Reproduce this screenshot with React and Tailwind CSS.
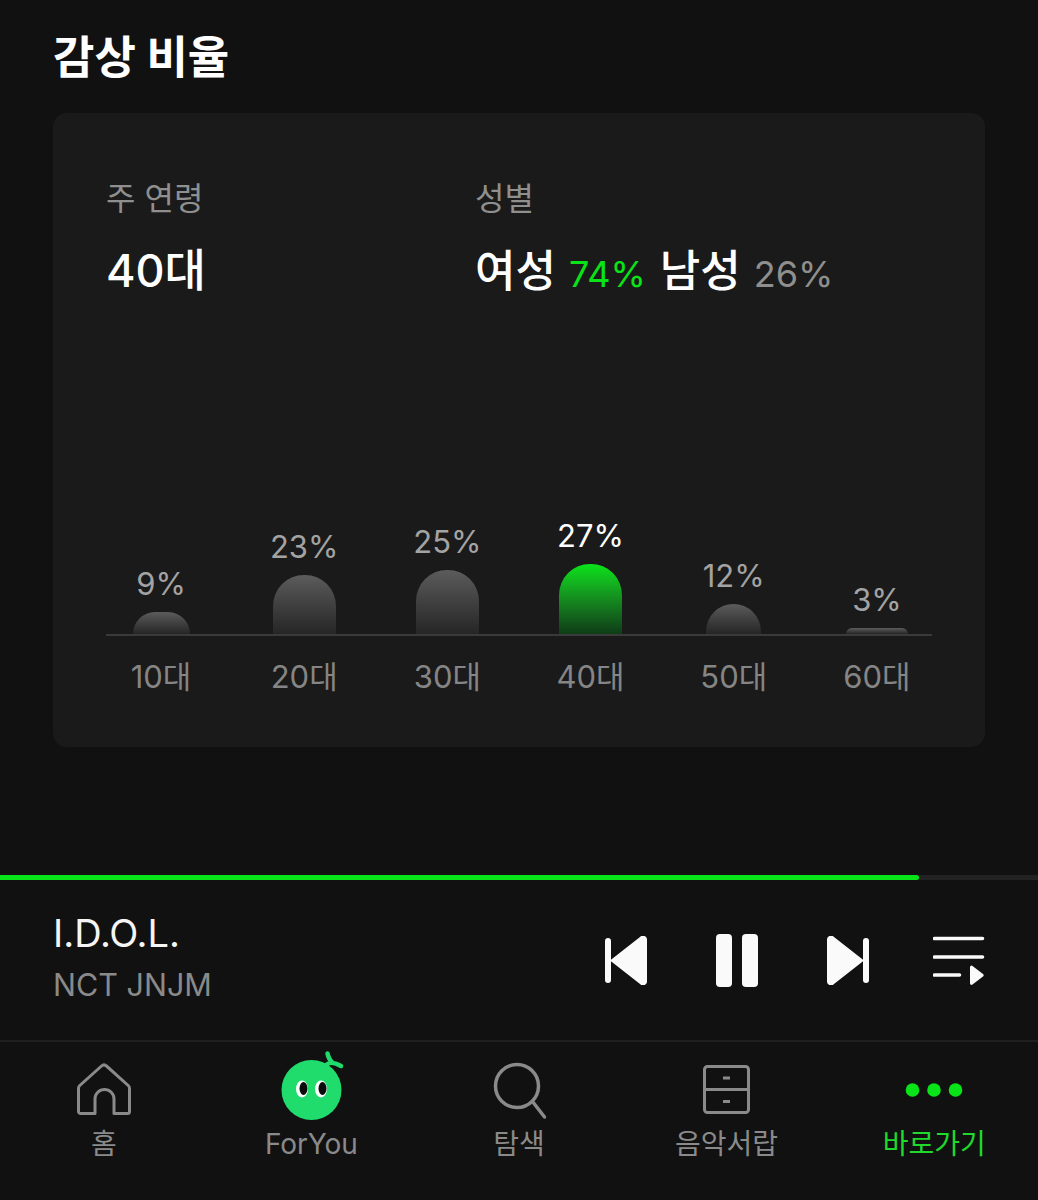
import React from 'react';

const ages = [
  { pct: '9%', label: '10대', bar: 'h-[22px] w-[57px]' },
  { pct: '23%', label: '20대', bar: 'h-[59px] w-[63px]' },
  { pct: '25%', label: '30대', bar: 'h-[64px] w-[63px]' },
  { pct: '27%', label: '40대', bar: 'h-[70px] w-[63px]', active: true },
  { pct: '12%', label: '50대', bar: 'h-[30px] w-[55px]' },
  { pct: '3%', label: '60대', bar: 'h-[6px] w-[62px]' },
];

const HomeIcon = () => (
  <svg width="70" height="60" viewBox="0 0 70 60" fill="none" stroke="#8a8a8a" strokeWidth="3" strokeLinejoin="round">
    <path d="M12 53.500a2 2 0 0 1-2.500-2V28.500a4 4 0 0 1 1.300-3L32.500 6a3.800 3.800 0 0 1 5 0l21.700 19.500a4 4 0 0 1 1.300 3V51.500a2 2 0 0 1-2 2H45V39a9.500 9.500 0 0 0-19 0V53.500Z" />
  </svg>
);

const ForYouIcon = () => (
  <svg width="70" height="60" viewBox="0 0 70 60" fill="none" className="overflow-visible">
    <circle cx="35.500" cy="30" r="30" fill="#1fdc6c" />
    <path d="M51.500 -6.500C52.500 -2 54 0.500 56 2M50 5C53 2 59 2.500 65 6" stroke="#1fdc6c" strokeWidth="4.500" strokeLinecap="round" />
    <ellipse cx="26" cy="29" rx="6" ry="8.500" fill="#fff" />
    <ellipse cx="45" cy="29" rx="6" ry="8.500" fill="#fff" />
    <ellipse cx="27.500" cy="28.500" rx="4" ry="6.500" fill="#0b0b0b" />
    <ellipse cx="46.500" cy="28.500" rx="4" ry="6.500" fill="#0b0b0b" />
  </svg>
);

const SearchIcon = () => (
  <svg width="70" height="60" viewBox="0 0 70 60" fill="none" stroke="#8a8a8a" strokeWidth="3.500" strokeLinecap="round">
    <circle cx="33" cy="26" r="21.500" />
    <path d="M48.500 41.500L60.500 57" />
  </svg>
);

const DrawerIcon = () => (
  <svg width="70" height="60" viewBox="0 0 70 60" fill="none" stroke="#8a8a8a" strokeWidth="3">
    <rect x="12.500" y="6.500" width="44" height="46" rx="3" />
    <path d="M12.500 29.500H56.500" />
    <path d="M31 18H38M31 41.500H38" strokeWidth="3" />
  </svg>
);

const DotsIcon = () => (
  <svg width="70" height="60" viewBox="0 0 70 60" fill="#08e418">
    <circle cx="13.500" cy="30" r="6.800" />
    <circle cx="35" cy="30" r="6.800" />
    <circle cx="56.500" cy="30" r="6.800" />
  </svg>
);

const PrevIcon = () => (
  <svg width="42" height="49" viewBox="0 0 42 49" fill="#fafafa">
    <rect x="0" y="2" width="6" height="45" rx="3" />
    <path d="M5 24.500L35 1a4 4 0 0 1 7 3V45a4 4 0 0 1-7 3Z" />
  </svg>
);

const NextIcon = () => (
  <svg width="42" height="49" viewBox="0 0 42 49" fill="#fafafa">
    <rect x="36" y="2" width="6" height="45" rx="3" />
    <path d="M37 24.500L7 1a4 4 0 0 0-7 3V45a4 4 0 0 0 7 3Z" />
  </svg>
);

const PauseIcon = () => (
  <svg width="42" height="53" viewBox="0 0 42 53" fill="#fafafa">
    <rect x="0" y="0" width="16" height="53" rx="4" />
    <rect x="26" y="0" width="16" height="53" rx="4" />
  </svg>
);

const QueueIcon = () => (
  <svg width="52" height="50" viewBox="0 0 52 50" fill="none">
    <path d="M1.500 2.500H49.500M1.500 21H49.500M1.500 39H26.500" stroke="#fafafa" strokeWidth="3.600" strokeLinecap="round" />
    <path d="M37 31a1.500 1.500 0 0 1 2.500-1L50 38a1.500 1.500 0 0 1 0 2.500L39.500 48.500a1.500 1.500 0 0 1-2.500-1Z" fill="#fafafa" />
  </svg>
);

const NavItem = ({ icon, label, active }) => (
  <div className="flex flex-col items-center">
    {icon}
    <span className={`mt-[6px] text-[28px] leading-[36px] ${active ? 'text-[#1fd92c]' : 'text-[#8a8a8a]'}`}>{label}</span>
  </div>
);

export default function App() {
  return (
    <div className="w-[1038px] h-[1200px] overflow-hidden bg-[#111111] font-['Inter','Noto_Sans_CJK_KR',sans-serif]">
      <div className="h-[113px] pl-[53px] pt-[3px] flex items-center">
        <h1 className="text-[45px] leading-[56px] font-bold text-white">감상 비율</h1>
      </div>

      {/* card */}
      <div className="mx-[53px] h-[634px] rounded-[14px] bg-[#1a1a1a] pt-[66px] px-[53px] flex flex-col">
        <div className="flex">
          <div className="w-[369px]">
            <div className="text-[32px] leading-[40px] text-[#8f8f8f]">주 연령</div>
            <div className="mt-[24px] text-[45px] leading-[56px] font-medium text-white">40대</div>
          </div>
          <div>
            <div className="text-[32px] leading-[40px] text-[#8f8f8f]">성별</div>
            <div className="mt-[24px] flex items-baseline leading-[56px] font-medium text-white">
              <span className="text-[44px]">여성</span>
              <span className="ml-[13px] text-[36px] font-normal text-[#08e418]">74%</span>
              <span className="ml-[14px] text-[44px]">남성</span>
              <span className="ml-[13px] text-[36px] font-normal text-[#8f8f8f]">26%</span>
            </div>
          </div>
        </div>

        <div className="mt-auto mb-[51px]">
          <div className="flex justify-between items-end border-b-[2px] border-[#3a3a3a]">
            {ages.map((a) => (
              <div key={a.label} className="w-[110px] flex flex-col items-center">
                <span className={`mb-[10px] text-[31px] leading-[36px] ${a.active ? 'text-white' : 'text-[#a3a3a3]'}`}>{a.pct}</span>
                <div className={`${a.bar} rounded-t-[31px] bg-gradient-to-b ${a.active ? 'from-[#08e418] to-[#0e3d16]' : 'from-[#5c5c5c] to-[#262626]'}`} />
              </div>
            ))}
          </div>
          <div className="mt-[22px] flex justify-between">
            {ages.map((a) => (
              <span key={a.label} className="w-[110px] text-center text-[31px] leading-[38px] text-[#858585]">{a.label}</span>
            ))}
          </div>
        </div>
      </div>

      {/* progress */}
      <div className="mt-[128px] h-[5px] bg-[#222222]">
        <div className="h-full w-[919px] rounded-r-full bg-[#08e418]" />
      </div>

      {/* player */}
      <div className="h-[160px] px-[53px] flex items-center justify-between">
        <div className="pb-[4px]">
          <div className="text-[38px] leading-[44px] text-[#f5f5f5]">I.D.O.L.</div>
          <div className="mt-[10px] text-[30.500px] leading-[40px] text-[#8a8a8a]">NCT JNJM</div>
        </div>
        <div className="flex items-center">
          <PrevIcon />
          <div className="ml-[69px]"><PauseIcon /></div>
          <div className="ml-[69px]"><NextIcon /></div>
          <div className="ml-[64px] pt-[2px]"><QueueIcon /></div>
        </div>
      </div>

      {/* bottom nav */}
      <div className="border-t-[2px] border-[#1f1f1f] pt-[18px] grid grid-cols-5">
        <NavItem icon={<HomeIcon />} label="홈" />
        <NavItem icon={<ForYouIcon />} label="ForYou" />
        <NavItem icon={<SearchIcon />} label="탐색" />
        <NavItem icon={<DrawerIcon />} label="음악서랍" />
        <NavItem icon={<DotsIcon />} label="바로가기" active />
      </div>
    </div>
  );
}
